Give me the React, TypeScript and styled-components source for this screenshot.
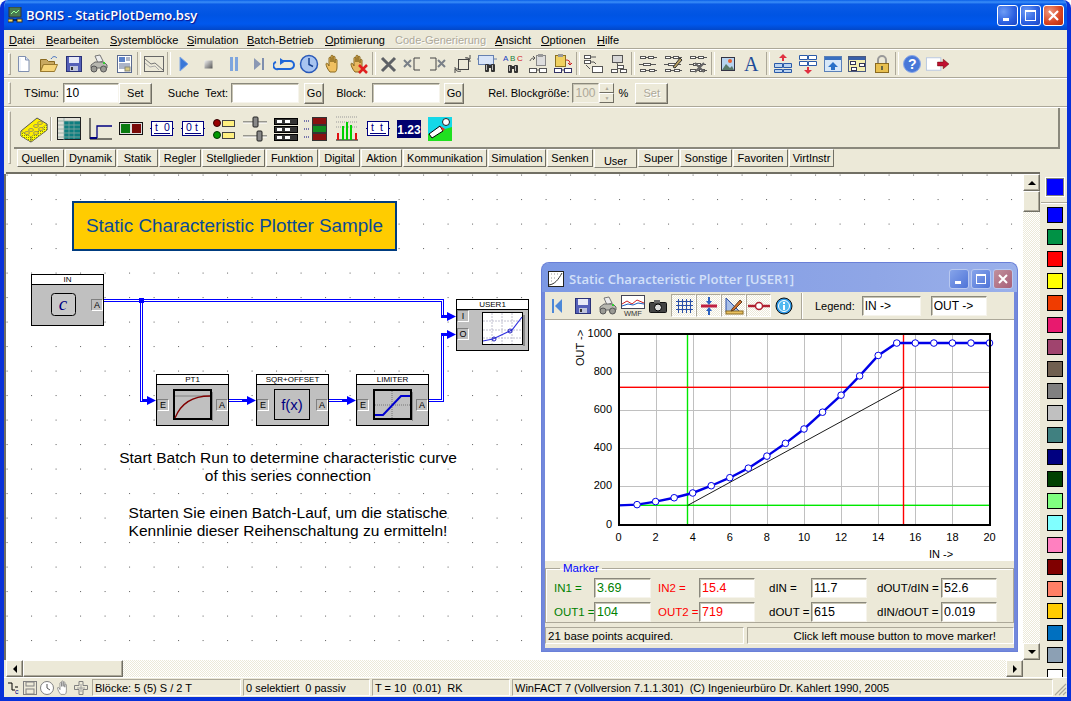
import React from "react";
import styled, { createGlobalStyle } from "styled-components";

const Global = createGlobalStyle`
  html, body { margin: 0; padding: 0; background: #fff; overflow: hidden; }
  * { box-sizing: border-box; }
`;
const UI = `"Liberation Sans", Arial, sans-serif`;
const FACE = "#ECE9D8";
const Dither = `repeating-conic-gradient(#fff 0 25%, ${FACE} 0 50%) 0 0 / 2px 2px`;

const Frame = styled.div`
  width: 1071px; height: 701px; display: flex; flex-direction: column; overflow: hidden;
  background: ${FACE}; border-radius: 8px 8px 0 0; font: 11px ${UI}; color: #000;
  border-left: 4px solid #0831D9; border-right: 4px solid #0831D9; border-bottom: 4px solid #0831D9;
`;
const TitleBar = styled.div`
  height: 30px; margin: 0 -4px; padding: 0 7px 0 8px; display: flex; align-items: center; flex: none;
  background: linear-gradient(180deg, #0A5FE8 0%, #3B8EF8 7%, #0A5BE6 14%, #0054E3 50%, #0058EE 80%, #0247C8 100%);
`;
const TitleText = styled.span`
  margin-left: 3px; color: #fff; font: 600 13px "Open Sans", sans-serif; text-shadow: 1px 1px 1px #0F1089;
`;
const CapGroup = styled.div`margin-left: auto; display: flex; gap: 2px;`;
const CapBtn = styled.div<{ $close?: boolean; $dim?: boolean; $s?: number }>`
  width: ${p => p.$s ?? 21}px; height: ${p => p.$s ?? 21}px; border: 1px solid ${p => (p.$dim ? "#B8C8F0" : "#fff")}; border-radius: 3px;
  display: flex; align-items: center; justify-content: center;
  background: ${p => p.$close
    ? (p.$dim ? "linear-gradient(135deg,#C0909C,#A85F78)" : "radial-gradient(circle at 30% 30%,#EE9A80,#D8431F 60%,#B52A0C)")
    : (p.$dim ? "linear-gradient(135deg,#86A4EA,#4F74D8)" : "radial-gradient(circle at 30% 30%,#6E9CF5,#2A5FE0 60%,#1C46C4)")};
`;
const MenuBar = styled.div`height: 19px; display: flex; align-items: center; padding-left: 5px; flex: none;`;
const MenuItem = styled.span<{ $w: number; $off?: boolean }>`
  width: ${p => p.$w}px; flex: none; white-space: nowrap; color: ${p => (p.$off ? "#ACA899" : "#000")};
  text-shadow: ${p => (p.$off ? "1px 1px 0 #fff" : "none")};
  u { text-decoration-thickness: 1px; text-underline-offset: 1px; }
`;
const Band = styled.div<{ $h: number }>`
  height: ${p => p.$h}px; flex: none; display: flex; align-items: center; position: relative;
  border-top: 1px solid #fff; box-shadow: 0 -1px 0 #ACA899;
`;
const Grip = styled.div`
  width: 3px; height: calc(100% - 6px); margin-left: 4px; flex: none;
  border-left: 1px solid #fff; border-top: 1px solid #fff; border-right: 1px solid #ACA899; border-bottom: 1px solid #ACA899;
`;
const Tools = styled.div`display: flex; align-items: center; margin-left: 1px; padding-bottom: 1px;`;
const ToolBtn = styled.div`width: 24.95px; height: 24px; display: flex; align-items: center; justify-content: center; flex: none;`;
const Sep = styled.div`width: 5px; height: 23px; flex: none; display: flex; justify-content: center; &::before { content: ""; width: 2px; border-left: 1px solid #ACA899; border-right: 1px solid #fff; }`;
const Label = styled.span<{ $ml: number }>`margin-left: ${p => p.$ml}px; white-space: pre; flex: none;`;
const Field = styled.input<{ $w: number; $ml?: number; $color?: string; $off?: boolean }>`
  width: ${p => p.$w}px; height: 20px; flex: none; margin: 0 0 0 ${p => p.$ml ?? 0}px; padding: 0 2px; background: ${p => (p.$off ? FACE : "#fff")};
  border: 1px solid; border-color: #8A887C #F6F4EC #F6F4EC #8A887C; box-shadow: inset 1px 1px 0 #C8C5B4; outline: none;
  font: 12px ${UI}; color: ${p => p.$color ?? (p.$off ? "#ACA899" : "#000")};
`;
const Btn = styled.div<{ $w: number; $ml?: number; $off?: boolean }>`
  width: ${p => p.$w}px; height: 21px; flex: none; margin-left: ${p => p.$ml ?? 0}px; display: flex; align-items: center; justify-content: center;
  background: ${FACE}; border: 1px solid; border-color: #fff #716F64 #716F64 #fff; box-shadow: inset -1px -1px 0 #ACA899;
  color: ${p => (p.$off ? "#ACA899" : "#000")}; text-shadow: ${p => (p.$off ? "1px 1px 0 #fff" : "none")};
`;
const Spin = styled.div`width: 15px; height: 20px; flex: none; display: flex; flex-direction: column;`;
const SpinPart = styled.div`flex: 1; border: 1px solid; border-color: #fff #716F64 #716F64 #fff; display: flex; align-items: center; justify-content: center; font-size: 5px; color: #ACA899;`;
const PaletteCol = styled.div`display: flex; flex-direction: column; flex: none; margin-left: 3px; height: 100%; align-self: flex-start;`;
const IconShelf = styled.div`
  width: 1046px; height: 41px; display: flex; align-items: center; padding: 2px 0 0 5px; flex: none;
  border-right: 2px solid #8A887C; border-bottom: 2px solid #8A887C;
`;
const PaletteBtn = styled.div`width: 30.9px; height: 28px; display: flex; align-items: center; justify-content: center; flex: none;`;
const ShelfSep = styled.div`width: 2px; height: 24px; margin: 0 2px 0 0; border-left: 1px solid #ACA899; border-right: 1px solid #fff; flex: none;`;
const TabRow = styled.div`display: flex; gap: 1px; padding-left: 3px; height: 18px;`;
const Tab = styled.div<{ $w: number; $on?: boolean }>`
  width: ${p => p.$w}px; flex: none; height: ${p => (p.$on ? 19 : 18)}px; display: flex; align-items: center; justify-content: center; font-size: 11px;
  padding-top: ${p => (p.$on ? 4 : 0)}px; background: ${FACE}; white-space: nowrap;
  border: 1px solid; border-color: ${p => (p.$on ? `${FACE} #716F64 #8A887C #fff` : "#fff #716F64 #716F64 #fff")};
`;
const Main = styled.div`flex: 1; min-height: 0; display: flex; padding-top: 5px;`;
const Doc = styled.div`flex: none; width: 1036px; padding: 0 0 0 2px; display: flex; flex-direction: column;`;
const DocRow = styled.div`height: 488px; flex: none; display: flex; border-top: 2px solid #716F64;`;
const Canvas = styled.div`
  width: 1017px; height: 486px; flex: none; position: relative; overflow: hidden; background-color: #fff;
  box-shadow: -2px 0 0 #716F64;
  background-image: radial-gradient(circle at 0.5px 0.5px, #555 0.65px, transparent 0.8px);
  background-size: 24.5px 24.5px; background-position: 0.6px 0.6px;
`;
const VScroll = styled.div`width: 17px; height: 486px; flex: none; display: flex; flex-direction: column; background: ${Dither};`;
const HScroll = styled.div`width: 1017px; height: 17px; flex: none; display: flex; background: ${Dither};`;
const SBtn = styled.div<{ $w?: number; $h?: number }>`
  width: ${p => p.$w ?? 17}px; height: ${p => p.$h ?? 17}px; flex: none; background: ${FACE}; display: flex; align-items: center; justify-content: center;
  border: 1px solid; border-color: #fff #716F64 #716F64 #fff; box-shadow: inset -1px -1px 0 #ACA899;
`;
const Spacer = styled.div`flex: 1;`;
const Tri = styled.div<{ $dir: "u" | "d" | "l" | "r" }>`
  width: 0; height: 0; border: 4px solid transparent;
  ${p => p.$dir === "u" ? "border-bottom-color:#000;border-top-width:0;" : p.$dir === "d" ? "border-top-color:#000;border-bottom-width:0;" : p.$dir === "l" ? "border-right-color:#000;border-left-width:0;" : "border-left-color:#000;border-right-width:0;"}
`;
const Palette = styled.div`width: 27px; flex: none; display: flex; flex-direction: column; padding: 6px 0 0 7px; overflow: hidden;`;
const BigSwatch = styled.div<{ $c: string }>`width: 18px; height: 18px; margin-left: -1px; flex: none; background: ${p => p.$c}; border: 1px solid #808080; box-shadow: 0 0 0 1px #fff;`;
const PalRule = styled.div`height: 2px; flex: none; margin: 6px 0 3px -6px; width: 30px; border-top: 1px solid #ACA899; border-bottom: 1px solid #fff;`;
const Swatch = styled.div<{ $c: string }>`width: 16px; height: 16px; flex: none; margin-bottom: 6px; background: ${p => p.$c}; border: 1px solid #000;`;
const Status = styled.div`height: 20px; flex: none; display: flex; align-items: stretch; padding: 1px 0 1px 3px; border-top: 1px solid #fff; font-size: 11px;`;
const StatusIcons = styled.div`width: 85px; flex: none; display: flex; align-items: center; gap: 1px;`;
const Cell = styled.div<{ $w?: number; $ml?: number }>`
  ${p => (p.$w ? `width:${p.$w}px;flex:none;` : "flex:1;")} margin-left: ${p => p.$ml ?? 0}px; padding-left: 2px; display: flex; align-items: center; white-space: pre;
  border: 1px solid; border-color: #ACA899 #fff #fff #ACA899; overflow: hidden;
`;
const GripBox = styled.div`margin-left: auto; width: 14px; flex: none; align-self: flex-end; height: 14px; display: flex;`;

/* diagram */
const Wires = styled.svg`position: absolute; left: 0; top: 0;`;
const Banner = styled.div`
  position: absolute; left: 66px; top: 27px; width: 325px; height: 50px; background: #FFCC00; border: 2px solid #003C80;
  display: flex; align-items: center; justify-content: center; color: #0A4A96; font: 18.9px ${UI};
`;
const Block = styled.div<{ $x: number; $y: number }>`
  position: absolute; left: ${p => p.$x - 6}px; top: ${p => p.$y - 174}px; width: 73px; height: 52px; background: #C0C0C0; border: 1px solid #000;
  display: flex; flex-direction: column;
`;
const BlockTitle = styled.div`height: 10px; flex: none; background: #fff; border-bottom: 1px solid #000; font: 8px/9px ${UI}; text-align: center;`;
const BlockBody = styled.div`flex: 1; display: flex; align-items: center; justify-content: space-between;`;
const PortCol = styled.div`display: flex; flex-direction: column; gap: 6px; align-self: flex-start;`;
const Port = styled.div`
  width: 12px; height: 12px; flex: none; background: #BEBEBE; border: 1px solid; border-color: #808080 #fff #fff #808080; font: 9px/10px ${UI}; text-align: center;
`;
const PortGap = styled.div`width: 5px; flex: none;`;
const Note = styled.div`
  position: absolute; left: 82px; width: 400px; top: 275px; text-align: center; font: 15.5px/18.3px ${UI};
`;
const NoteGap = styled.div`height: 18px;`;

/* plotter */
const Plotter = styled.div`
  position: absolute; left: 536px; top: 89px; width: 475px; height: 388px; display: flex; flex-direction: column;
  background: ${FACE}; border: 3px solid #7288DC; border-top: 0; border-radius: 7px 7px 0 0; box-shadow: 0 0 0 1px #6A80D8;
`;
const PlotTitle = styled.div`
  height: 29px; flex: none; margin: 0 -3px; padding: 3px 4px 0 6px; display: flex; align-items: center; border-radius: 7px 7px 0 0;
  background: linear-gradient(90deg, #7C98E4 0%, #8FA6E6 70%, #9AB0EA 100%);
`;
const PlotTitleText = styled.span`margin-left: 5px; color: #D3E0F8; font: 600 13.1px "Open Sans", sans-serif;`;
const PlotTools = styled.div`height: 28px; flex: none; display: flex; align-items: center; border-bottom: 1px solid #ACA899;`;
const PlotBtn = styled.div<{ $on?: boolean }>`
  width: 25px; height: 23px; flex: none; display: flex; align-items: center; justify-content: center;
  ${p => (p.$on ? `background: ${Dither}; border: 1px solid; border-color: #ACA899 #fff #fff #ACA899;` : "")}
`;
const PlotSpacer = styled.div<{ $w: number }>`width: ${p => p.$w}px; flex: none;`;
const PlotSep = styled.div`width: 2px; height: 26px; margin: 0 12px 0 5px; border-left: 1px solid #ACA899; border-right: 1px solid #fff; flex: none;`;
const Chart = styled.svg`display: block; flex: none; background: #fff;`;
const Group = styled.fieldset`
  margin: 2px 0 0 0; padding: 0 0 0 8px; height: 60px; flex: none; border: 1px solid #ACA899; box-shadow: inset 1px 1px 0 #fff; min-width: 0;
`;
const GroupLegend = styled.legend`color: #0000FF; font-size: 11.5px; padding: 0 3px; margin-left: 6px; line-height: 11px;`;
const MarkerGrid = styled.div`
  display: grid; grid-template-columns: 40px 57px 48px 56px 56px 56px 74px 56px; grid-auto-rows: 20px; row-gap: 4px; margin-top: 4px; align-items: center;
`;
const MLabel = styled.span<{ $c?: string; $pl?: number }>`color: ${p => p.$c ?? "#000"}; padding-left: ${p => p.$pl ?? 0}px; white-space: nowrap; font-size: 11.5px;`;
const MField = styled(Field).attrs({ readOnly: true })`width: 100%; height: 20px; font-size: 12.5px; margin: 0;`;
const PlotStatus = styled.div`flex: 1; display: flex; gap: 3px; padding-top: 4px; font-size: 11.5px; min-height: 0;`;
const PlotCell = styled.div<{ $w?: number; $right?: boolean }>`
  ${p => (p.$w ? `width:${p.$w}px;flex:none;` : "flex:1;")} height: 17px; display: flex; align-items: center; padding: 0 2px; white-space: nowrap;
  justify-content: ${p => (p.$right ? "flex-end" : "flex-start")}; padding-right: ${p => (p.$right ? 17 : 2)}px;
  border: 1px solid; border-color: #ACA899 #fff #fff #ACA899;
`;

/* ---- drawings ---- */
const Ic = ({ w = 20, h = 20, children }: { w?: number; h?: number; children: React.ReactNode }) => (
  <svg width={w} height={h} viewBox={`0 0 ${w} ${h}`}>{children}</svg>
);
const Binoc = ({ x = 0, y = 0 }: { x?: number; y?: number }) => (
  <g transform={`translate(${x} ${y})`} fill="#333">
    <rect x="1" y="2" width="4" height="8" rx="1" /><rect x="7" y="2" width="4" height="8" rx="1" /><rect x="4" y="3" width="4" height="3" />
    <rect x="2" y="3" width="1" height="5" fill="#BBB" /><rect x="8" y="3" width="1" height="5" fill="#BBB" />
  </g>
);
const Mini = ({ x, y, w = 7, h = 4, c = "#555", f = "#fff" }: { x: number; y: number; w?: number; h?: number; c?: string; f?: string }) => (
  <rect x={x + 0.5} y={y + 0.5} width={w} height={h} fill={f} stroke={c} />
);
const Net = ({ extra }: { extra?: React.ReactNode }) => (
  <Ic>
    <Mini x={2} y={2} w={5} h={2} /><Mini x={10} y={2} w={5} h={2} /><path d="M7 3.500h3M15 3.500h4M1 10.500h4M13 10.500h5" stroke="#555" fill="none" />
    <Mini x={5} y={9} w={7} h={2} /><Mini x={2} y={15} w={5} h={2} /><Mini x={11} y={15} w={5} h={2} /><path d="M7 16.500h4M16 16.500h3" stroke="#555" />
    {extra}
  </Ic>
);
const handPath = "M6 18c-2-2-4-6-4-8 0-1 1-1 2 0l1 2V4c0-1 2-1 2 0v4-6c0-1 2-1 2 0v6-5c0-1 2-1 2 0v6-3c0-1 2-1 2 0v7c0 3-1 5-2 5H6z";
const TBox = ({ a, b }: { a: string; b: string }) => (
  <Ic w={24} h={18}>
    <rect x="1.500" y="1.500" width="21" height="14" fill="#fff" stroke="#000080" />
    <rect x="0" y="8" width="1" height="1" fill="#000080" /><rect x="23" y="8" width="1" height="1" fill="#000080" />
    <text x="5" y="11" fontSize="10.5" fontFamily={UI} fill="#000080">{a}</text>
    <text x="14" y="11" fontSize="10.5" fontFamily={UI} fill="#000080">{b}</text>
    <path d="M4 13.500h16" stroke="#000080" />
  </Ic>
);

const icons: Record<string, React.ReactNode> = {
  new: <Ic><path d="M4.500 2.500h7l3.500 3.500v11.500h-10.500z" fill="#fff" stroke="#7F8FB0" /><path d="M11.500 2.500v3.500h3.500" fill="#D8E2F4" stroke="#7F8FB0" /><path d="M6 17V4" stroke="#DCE6F6" /></Ic>,
  open: <Ic><path d="M1.500 5.500h6l2 2h6v3h-11l-3 7z" fill="#C8A860" stroke="#8A6A20" /><path d="M1.500 17.500l3-7h14l-3 7z" fill="#F6D57A" stroke="#9A7A30" /><path d="M12 5c2-3 4-3 6-1" stroke="#3A6AC0" fill="none" /></Ic>,
  save: <Ic><rect x="2.500" y="2.500" width="15" height="15" fill="#5560B8" stroke="#2A3278" /><rect x="5" y="3" width="10" height="6" fill="#E8EAF6" /><rect x="6" y="12" width="8" height="5" fill="#BFC4DC" /><rect x="7" y="13" width="2" height="3" fill="#333" /></Ic>,
  print: <Ic><path d="M6 2l5-1 3 6-5 2z" fill="#EDEDED" stroke="#777" /><path d="M2 11l4-3h9l3 3v3H2z" fill="#B8B8B0" stroke="#666" /><circle cx="5" cy="15" r="3" fill="#9A9A94" stroke="#555" /><circle cx="14.500" cy="15" r="3" fill="#9A9A94" stroke="#555" /><rect x="14" y="8" width="2" height="2" fill="#3C3" /></Ic>,
  props: <Ic><rect x="3.500" y="1.500" width="14" height="17" fill="#fff" stroke="#5A6A90" /><rect x="5" y="3" width="6" height="5" fill="#5A80C8" /><path d="M12 4h4M12 6h4M5 10h11M5 12h11M5 14h7" stroke="#5A6A90" /><rect x="11" y="13" width="5" height="4" fill="#D8C880" stroke="#887" /></Ic>,
  plot: <Ic w={24}><rect x="2.500" y="2.500" width="19" height="15" fill={FACE} stroke="#666" /><path d="M3 5l6 5 4-1 8 7" stroke="#777" fill="none" /><path d="M3 9l5 4 5-1 4 4" stroke="#AAA" fill="none" /></Ic>,
  play: <Ic><path d="M6 3l8 7-8 7z" fill="#3A78D8" stroke="#7FA6E4" /></Ic>,
  stop: <Ic><defs><linearGradient id="stg" x1="0" y1="0" x2="1" y2="1"><stop offset="0" stopColor="#F0F0F0" /><stop offset="1" stopColor="#555" /></linearGradient></defs><rect x="5.500" y="6.500" width="8" height="8" fill="url(#stg)" /></Ic>,
  pause: <Ic><rect x="6" y="3" width="3" height="14" fill="#7FA6DE" /><rect x="11" y="3" width="3" height="14" fill="#7FA6DE" /></Ic>,
  step: <Ic><path d="M5 4l7 6-7 6z" fill="#8A98B4" /><rect x="13" y="4" width="2" height="12" fill="#7F8FAE" /></Ic>,
  loop: <Ic w={22}><path d="M7 6h10a3.500 3.500 0 010 8H5a3.500 3.500 0 01-2-7" fill="none" stroke="#1E66D8" strokeWidth="2" transform="translate(0 1)" /><path d="M7 4v7l5-3.500z" fill="#1E66D8" /></Ic>,
  clock: <Ic><circle cx="10" cy="10" r="8.500" fill="#A8C4F0" stroke="#2858B8" strokeWidth="1.500" /><path d="M10 4v6.500l4 2" fill="none" stroke="#16408E" strokeWidth="1.500" /></Ic>,
  hand: <Ic><path d={handPath} fill="#F0C060" stroke="#8A6A20" /></Ic>,
  handx: <Ic><path d={handPath} fill="#E8B860" stroke="#8A6A20" /><path d="M10 11l8 8M18 11l-8 8" stroke="#E02020" strokeWidth="2.500" /></Ic>,
  x: <Ic><path d="M3 4l13 13M16 4L3 17" stroke="#5E6166" strokeWidth="3" /></Ic>,
  xl: <Ic w={22}><path d="M1 6l7 7M8 6l-7 7" stroke="#7A8088" strokeWidth="2" /><path d="M17 4h-6v12h6" fill="none" stroke="#444" /></Ic>,
  xr: <Ic w={22}><path d="M3 4h6v12H3" fill="none" stroke="#444" /><path d="M11 6l7 7M18 6l-7 7" stroke="#7A8088" strokeWidth="2" /></Ic>,
  rot: <Ic><rect x="5.500" y="5.500" width="10" height="10" fill="none" stroke="#444" /><path d="M12 4c2-1 5 0 5 4M17 1v4h-4M8 17c-3 1-6 0-6-4M2 19v-4h4" fill="none" stroke="#444" /></Ic>,
  find: <Ic w={22}><rect x="1.500" y="1.500" width="15" height="9" fill="#D8E4F8" stroke="#6680B0" /><path d="M2 5h-2M17 5h3" stroke="#6680B0" /><Binoc x={7} y={8} /></Ic>,
  abc: <Ic w={22}><text x="1" y="7" fontSize="8" fontFamily={UI} fill="#2040C0">A</text><text x="8" y="7" fontSize="8" fontFamily={UI} fill="#208040">B</text><text x="15" y="7" fontSize="8" fontFamily={UI} fill="#D02020">C</text><Binoc x={5} y={9} /></Ic>,
  copyb: <Ic><rect x="8.500" y="1.500" width="9" height="10" fill="#DDD" stroke="#888" /><rect x="10" y="0" width="5" height="3" fill="#999" /><path d="M2 7c1-3 3-3 5-3m-2-2l2 2-2 2" fill="none" stroke="#555" /><Mini x={1} y={14} w={7} h={4} /><Mini x={11} y={14} w={7} h={4} /><path d="M8 16h3" stroke="#555" /></Ic>,
  pasteb: <Ic><rect x="2.500" y="1.500" width="10" height="11" fill="#F0D060" stroke="#8A7020" /><rect x="5" y="0" width="5" height="3" fill="#999" /><path d="M13 6c3 0 4 1 4 4m-2-1l2 2 2-2" fill="none" stroke="#D02020" /><Mini x={1} y={14} w={7} h={4} c="#336" /><Mini x={11} y={14} w={7} h={4} c="#336" /><path d="M8 16h3" stroke="#336" /></Ic>,
  n1: <Ic><Mini x={1} y={1} w={6} h={3} /><Mini x={1} y={6} w={6} h={3} /><path d="M7 3h6M7 8h4l2 2M3 11l4 4" stroke="#555" fill="none" /><Mini x={9} y={12} w={10} h={6} /></Ic>,
  n2: <Ic><rect x="4.500" y="1.500" width="10" height="7" fill="#D8D8D8" stroke="#555" /><path d="M9 9l1 3" stroke="#555" /><Mini x={9} y={11} w={6} h={3} /><Mini x={3} y={15} w={6} h={3} /><Mini x={12} y={15} w={6} h={3} /></Ic>,
  n3: <Net />,
  n4: <Net extra={<path d="M10 13l7-9 2 2-7 8z" fill="#B8A060" stroke="#333" />} />,
  n5: <Net extra={<path d="M7 9l9 9M16 9l-9 9" stroke="#666" strokeWidth="2" />} />,
  pic: <Ic><rect x="3.500" y="3.500" width="13" height="13" fill="#B8D4F0" stroke="#334" /><path d="M4 16l4-6 4 4 2-2 2 4z" fill="#5A7A6A" /><circle cx="12" cy="7" r="2" fill="#E86030" /></Ic>,
  a: <Ic w={20} h={24}><text x="1" y="19" fontSize="20" fontFamily={`"Liberation Serif", serif`} fill="#1E4C98">A</text></Ic>,
  up1: <Ic><path d="M10 0l-4 4h3v3h2V4h3z" fill="#E03040" /><path d="M1.500 9.500h8v4h-8zM10.500 9.500h8v4h-8zM1.500 15.500h8v3h-8zM10.500 15.500h8v3h-8z" fill="#BCD4F0" stroke="#2A5AA8" /></Ic>,
  dn1: <Ic><path d="M1.500 1.500h8v4h-8zM10.500 1.500h8v4h-8zM1.500 7.500h8v4h-8zM10.500 7.500h8v4h-8z" fill="#fff" stroke="#2A5AA8" /><path d="M10 20l-4-4h3v-3h2v3h3z" fill="#E03040" /></Ic>,
  win: <Ic><rect x="1.500" y="2.500" width="17" height="15" fill="#D8E8F8" stroke="#5A80B8" /><rect x="2" y="3" width="16" height="3" fill="#3A70C0" /><path d="M10 8l-5 5h3v3h4v-3h3z" fill="#2A70C8" /></Ic>,
  tree: <Ic><rect x="1.500" y="2.500" width="17" height="15" fill="#F4EEB0" stroke="#4A5A80" /><rect x="2" y="3" width="16" height="3" fill="#3A60A8" /><Mini x={3} y={7} w={5} h={3} c="#335" /><Mini x={12} y={9} w={5} h={3} c="#335" /><Mini x={4} y={13} w={5} h={3} c="#335" /></Ic>,
  lock: <Ic><path d="M6 9V6a4 4 0 018 0v3" fill="none" stroke="#999" strokeWidth="2" /><rect x="3.500" y="9.500" width="13" height="9" fill="#E8C050" stroke="#8A6A20" /><rect x="9" y="12" width="2" height="4" fill="#664" /></Ic>,
  help: <Ic><circle cx="10" cy="10" r="8.500" fill="#4878D8" stroke="#8AA8E8" /><text x="6" y="15" fontSize="14" fontWeight="700" fontFamily={UI} fill="#fff">?</text></Ic>,
  exit: <Ic w={26}><rect x="1.500" y="3.500" width="15" height="13" fill="#fff" stroke="#B8C8E0" /><path d="M13 8h6V5l6 5-6 5v-3h-6z" fill="#C01030" stroke="#600" strokeWidth=".5" /></Ic>,
  brick: <Ic w={28} h={28}>
    <defs><pattern id="yd" width="2" height="2" patternUnits="userSpaceOnUse"><rect width="2" height="2" fill="#FFFF00" /><rect width="1" height="1" fill="#8A8A00" /></pattern></defs>
    <path d="M1 16L17 3l10 6v6L11 27 1 21z" fill="#FFF000" stroke="#555" />
    <path d="M1 16l10 6v5L1 21zM11 22L27 9v6L11 27z" fill="url(#yd)" stroke="#666" strokeWidth=".5" />
    <g fill="#FFE800" stroke="#777" strokeWidth=".7"><ellipse cx="11" cy="15" rx="2.500" ry="1.500" /><ellipse cx="16" cy="11" rx="2.500" ry="1.500" /><ellipse cx="20" cy="8" rx="2.500" ry="1.500" /><ellipse cx="16" cy="18" rx="2.500" ry="1.500" /><ellipse cx="21" cy="14" rx="2.500" ry="1.500" /><ellipse cx="7" cy="18" rx="2.500" ry="1.500" /></g>
  </Ic>,
  table: <Ic w={24} h={24}><rect x=".5" y=".5" width="23" height="22" fill="#E0E0D8" stroke="#222" /><rect x="7" y="4" width="16" height="18" fill="#0E7E80" /><path d="M1 4h22M1 8h22M1 12h22M1 16h22M1 20h22" stroke="#90A8A0" strokeWidth=".8" /><path d="M7 1v22M12 4v18M17 4v18" stroke="#80A8A8" strokeWidth=".7" /></Ic>,
  stepr: <Ic w={26} h={24}><path d="M3 1v21h22" fill="none" stroke="#000" /><path d="M10 21V9h15" fill="none" stroke="#000080" strokeWidth="1.300" /><path d="M3 21h7" stroke="#000080" strokeWidth="2" /></Ic>,
  boxes: <Ic w={24} h={20}><rect x=".5" y="3.500" width="23" height="12" fill="#ddd" stroke="#111" /><rect x="2" y="5" width="9" height="9" fill="#0A7A10" /><rect x="13" y="5" width="9" height="9" fill="#7A0A0A" /></Ic>,
  t10: <TBox a="t" b="0" />,
  t01: <TBox a="0" b="t" />,
  lamps: <Ic w={24} h={22}><circle cx="5" cy="5" r="3.500" fill="#900" stroke="#300" /><circle cx="5" cy="17" r="3.500" fill="#090" stroke="#030" /><rect x="10.500" y="2.500" width="12" height="6" fill="#FFF080" stroke="#444" /><rect x="10.500" y="14.500" width="12" height="6" fill="#FFF080" stroke="#444" /></Ic>,
  sliders: <Ic w={24} h={26}><path d="M0 6h24M0 20h24" stroke="#444" /><path d="M0 7h24M0 21h24" stroke="#fff" /><rect x="10" y="1" width="5" height="10" rx="1" fill="#888" stroke="#222" /><rect x="14" y="15" width="5" height="10" rx="1" fill="#888" stroke="#222" /></Ic>,
  rack: <Ic w={24} h={24}>{[1, 9, 17].map(y => <g key={y}><rect x=".5" y={y + 0.5} width="23" height="6" fill="#333" stroke="#000" /><path d={`M3 ${y + 2}h5v3H3zM11 ${y + 2}h5v3h-5z`} fill="#fff" /></g>)}</Ic>,
  meters: <Ic w={26} h={24}><path d="M1 4h6M1 12h6M1 20h6" stroke="#000080" strokeDasharray="1 1" /><rect x="9.500" y=".5" width="14" height="7" fill="#8A1010" stroke="#333" /><rect x="9.500" y="8.500" width="14" height="7" fill="#108A20" stroke="#333" /><rect x="9.500" y="16.500" width="14" height="7" fill="#8A1010" stroke="#333" /></Ic>,
  bars: <Ic w={26} h={26}><path d="M2 1h22M2 6h22M2 11h22" stroke="#999" strokeDasharray="1 1" /><path d="M2 24h22" stroke="#000" /><g fill="#00D000"><rect x="8" y="10" width="2" height="14" /><rect x="12" y="6" width="2" height="18" /><rect x="16" y="9" width="2" height="15" /></g><g fill="#E01010"><rect x="3" y="17" width="2" height="7" /><rect x="21" y="17" width="2" height="7" /></g></Ic>,
  t12: <TBox a="t" b="t" />,
  num: <Ic w={24} h={20}><rect y="1" width="24" height="18" fill="#00006E" /><text x="12" y="15" textAnchor="middle" fontSize="12" fontWeight="700" fontFamily={UI} fill="#fff">1.23</text></Ic>,
  art: <Ic w={24} h={24}><rect width="24" height="24" fill="#14D8E8" /><path d="M0 24V17L24 10v14z" fill="#20E020" /><circle cx="18" cy="5" r="3.500" fill="#fff" stroke="#222" /><path d="M1 17l11-8 3 5-11 7z" fill="#fff" stroke="#000" /><path d="M12 9l5 3-2 2z" fill="#F03020" /></Ic>,
  pFirst: <Ic><rect x="4" y="3" width="2" height="14" fill="#4C88D8" /><path d="M14 3v14L7 10z" fill="#4C88D8" /></Ic>,
  cam: <Ic><rect x="1.500" y="6.500" width="17" height="10" rx="1" fill="#444" stroke="#111" /><rect x="6" y="4" width="6" height="3" fill="#666" /><circle cx="10" cy="11.500" r="3.500" fill="#DDD" stroke="#000" /></Ic>,
  wmf: <Ic w={24} h={22}><rect x=".5" y=".5" width="23" height="13" fill="#fff" stroke="#445" /><path d="M1 9l5-3 5 3 5-4 7 3" fill="none" stroke="#D02020" /><path d="M1 11l6-2 5 1 5-2 6 1" fill="none" stroke="#2060C0" /><text x="12" y="21" textAnchor="middle" fontSize="7.500" fontFamily={UI} fill="#333">WMF</text></Ic>,
  grid: <Ic><path d="M4.500 3v14M8.500 3v14M12.500 3v14M16.500 3v14M2 5.500h17M2 9.500h17M2 13.500h17" stroke="#2A4FA8" /></Ic>,
  cross: <Ic><path d="M2 10h16" stroke="#C02040" strokeWidth="3" /><path d="M9 1h2v4h2l-3 4-3-4h2zM9 19h2v-4h2l-3-4-3 4h2z" fill="#2A60C0" /></Ic>,
  ruler: <Ic><path d="M2 2v14h14z" fill="#A8C0E8" stroke="#2A4FA8" /><rect x="2" y="15" width="17" height="3" fill="#E8C060" stroke="#8A6A20" /><path d="M8 13l8-9 2 2-8 8-3 1z" fill="#D07030" stroke="#604020" /></Ic>,
  dot: <Ic w={22}><path d="M0 10h22" stroke="#B02030" strokeWidth="2.500" /><circle cx="11" cy="10" r="3.500" fill="#fff" stroke="#B02030" strokeWidth="1.500" /></Ic>,
  info: <Ic><circle cx="10" cy="10" r="8" fill="#2E9AE8" stroke="#111" /><circle cx="10" cy="10" r="5.500" fill="#50B8F0" stroke="#fff" /><rect x="9" y="9" width="2" height="5" fill="#fff" /><rect x="9" y="6" width="2" height="2" fill="#fff" /></Ic>,
};
const tb1: (string | null)[] = ["new", "open", "save", "print", "props", null, "plot", null, "play", "stop", "pause", "step", "loop", "clock", "hand", "handx", null, "x", "xl", "xr", "rot", "find", "abc", "copyb", "pasteb", null, "n1", "n2", null, "n3", "n4", "n5", null, "pic", "a", null, "up1", "dn1", "win", "tree", "lock", null, "help", "exit"];
const menu: [string, string, number, boolean?][] = [["D", "atei", 37], ["B", "earbeiten", 64], ["S", "ystemblöcke", 77], ["S", "imulation", 60], ["B", "atch-Betrieb", 78], ["O", "ptimierung", 70], ["", "Code-Generierung", 100, true], ["A", "nsicht", 46], ["O", "ptionen", 56], ["H", "ilfe", 30]];
const tabs: [string, number, boolean?][] = [["Quellen", 47], ["Dynamik", 51], ["Statik", 41], ["Regler", 42], ["Stellglieder", 63], ["Funktion", 52], ["Digital", 41], ["Aktion", 41], ["Kommunikation", 84], ["Simulation", 58], ["Senken", 46], ["User", 43, true], ["Super", 41], ["Sonstige", 52], ["Favoriten", 55], ["VirtInstr", 45]];
const colours = ["#0000FF", "#009245", "#FF0000", "#FFFF00", "#F03C00", "#E8196E", "#A0446E", "#706050", "#808080", "#C0C0C0", "#408080", "#000080", "#004000", "#80FF80", "#80FFFF", "#FF80C0", "#800000", "#FF8066", "#FFCC00", "#0070C0", "#8CA0B4", "#FFFFFF"];

const Wire = ({ d }: { d: string }) => (
  <g fill="none" shapeRendering="crispEdges">
    <path d={d} stroke="#0000FF" strokeWidth="3" />
    <path d={d} stroke="#fff" strokeWidth="1" />
  </g>
);
const Arrow = ({ x, y }: { x: number; y: number }) => (
  <g fill="#0000FF"><rect x={x - 14} y={y - 1.5} width="6" height="3" /><path d={`M${x - 9} ${y - 4.500}L${x} ${y}L${x - 9} ${y + 4.500}z`} /></g>
);

/* chart helpers */
const X0 = 618.5, X1 = 989.5, Y0 = 523.5, Y1 = 332.5;
const px = (v: number) => X0 + (v / 20) * (X1 - X0);
const py = (v: number) => Y0 - (v / 1000) * (Y0 - Y1);
const snap = (v: number) => Math.round(v) + 0.5;
const data = [100, 104, 120, 140, 165, 203, 245, 295, 358, 425, 500, 588, 677, 778, 885, 950, 950, 950, 950, 950, 950];
const xt = Array.from({ length: 11 }, (_, i) => i * 2);
const yt = Array.from({ length: 6 }, (_, i) => i * 200);

const PlotChart = () => (
  <Chart width={469} height={241} viewBox="545 319 469 241">
    <g stroke="#C0C0C0" shapeRendering="crispEdges">
      {xt.slice(1, -1).map(v => <line key={v} x1={snap(px(v))} x2={snap(px(v))} y1={Y1} y2={Y0} />)}
      {yt.slice(1, -1).map(v => <line key={v} y1={snap(py(v))} y2={snap(py(v))} x1={X0} x2={X1} />)}
    </g>
    <rect x={X0} y="503.6" width={X1 - X0} height="1.4" fill="#00E800" />
    <rect x="686.8" y={Y1} width="1.4" height={Y0 - Y1} fill="#00E800" />
    <rect x={X0} y="385.6" width={X1 - X0} height="1.4" fill="#FF0000" />
    <rect x="902.8" y={Y1} width="1.4" height={Y0 - Y1} fill="#FF0000" />
    <line x1={687.5} y1={504.5} x2={903.5} y2={386.5} stroke="#000" strokeWidth=".9" />
    <polyline points={data.map((v, i) => `${px(i)},${py(v)}`).join(" ")} fill="none" stroke="#0000E8" strokeWidth="2.400" />
    {data.slice(1).map((v, i) => <circle key={i} cx={px(i + 1)} cy={py(v)} r="3.300" fill="#fff" stroke="#0000E8" strokeWidth="1" />)}
    <rect x={X0} y={Y1} width={X1 - X0} height={Y0 - Y1} fill="none" stroke="#000" strokeWidth="2" shapeRendering="crispEdges" />
    <g fontFamily={UI} fontSize="11" fill="#000">
      {yt.map(v => <text key={v} x="612" y={py(v) + 3} textAnchor="end">{v}</text>)}
      {xt.map(v => <text key={v} x={px(v)} y="540" textAnchor="middle">{v}</text>)}
      <text x="929" y="557">IN -&gt;</text>
      <text transform="translate(584 365) rotate(-90)">OUT -&gt;</text>
    </g>
  </Chart>
);

const CornerGrip = () => (
  <svg width="14" height="14" viewBox="0 0 14 14"><path d="M13 2L2 13M13 6L6 13M13 10l-3 3" stroke="#ACA899" fill="none" strokeWidth="1.200" /></svg>
);

export default function App() {
  return (
    <>
      <Global />
      <Frame>
        <TitleBar>
          <svg width="15" height="17" viewBox="0 0 15 17"><rect x="1" y="0" width="12" height="10" fill="#4A7A50" stroke="#333" /><path d="M3 7l3-3 2 2 3-3" stroke="#9F9" fill="none" /><rect x="0" y="12" width="5" height="3" fill="#FFE060" stroke="#333" /><rect x="9" y="12" width="5" height="3" fill="#FFE060" stroke="#333" /><path d="M5 13h4" stroke="#000" /></svg>
          <TitleText>BORIS - StaticPlotDemo.bsy</TitleText>
          <CapGroup>
            <CapBtn><svg width="13" height="13"><rect x="2" y="9" width="6" height="3" fill="#fff" /></svg></CapBtn>
            <CapBtn><svg width="13" height="13"><rect x="1.500" y="1.500" width="10" height="10" fill="none" stroke="#fff" /><rect x="1" y="1" width="11" height="2" fill="#fff" /></svg></CapBtn>
            <CapBtn $close><svg width="13" height="13"><path d="M2 2l9 9M11 2l-9 9" stroke="#fff" strokeWidth="2.200" /></svg></CapBtn>
          </CapGroup>
        </TitleBar>
        <MenuBar>
          {menu.map(([u, r, w, off]) => <MenuItem key={r} $w={w} $off={off}>{u && <u>{u}</u>}{r}</MenuItem>)}
        </MenuBar>
        <Band $h={29}>
          <Grip />
          <Tools>
            {tb1.map((n, i) => n ? <ToolBtn key={i}>{icons[n]}</ToolBtn> : <Sep key={i} />)}
          </Tools>
        </Band>
        <Band $h={29}>
          <Grip />
          <Label $ml={13}>TSimu:</Label>
          <Field $w={56} $ml={4} defaultValue="10" />
          <Btn $w={33}>Set</Btn>
          <Label $ml={16}>{"Suche  Text:"}</Label>
          <Field $w={68} $ml={3} />
          <Btn $w={20} $ml={5}>Go</Btn>
          <Label $ml={12}>Block:</Label>
          <Field $w={68} $ml={6} />
          <Btn $w={20} $ml={4}>Go</Btn>
          <Label $ml={24}>Rel. Blockgröße:</Label>
          <Field $w={27} $ml={3} $off defaultValue="100" />
          <Spin><SpinPart>▲</SpinPart><SpinPart>▼</SpinPart></Spin>
          <Label $ml={4}>%</Label>
          <Btn $w={33} $ml={7} $off>Set</Btn>
        </Band>
        <Band $h={60}>
          <Grip />
          <PaletteCol>
            <IconShelf>
              <PaletteBtn>{icons.brick}</PaletteBtn>
              <ShelfSep />
              {["table", "stepr", "boxes", "t10", "t01", "lamps", "sliders", "rack", "meters", "bars", "t12", "num", "art"].map(n => <PaletteBtn key={n}>{icons[n]}</PaletteBtn>)}
            </IconShelf>
            <TabRow>
              {tabs.map(([t, w, on]) => <Tab key={t} $w={w} $on={on}>{t}</Tab>)}
            </TabRow>
          </PaletteCol>
        </Band>
        <Main>
          <Doc>
            <DocRow>
              <Canvas>
                <Wires width="1017" height="486" viewBox="6 174 1017 486">
                  <Wire d="M103 300.500H442.500V316.500H450" />
                  <Wire d="M141.500 300V400.500H150" />
                  <Wire d="M228 400.500H250" />
                  <Wire d="M328 400.500H350" />
                  <Wire d="M429 400.500H442.500V334.500H450" />
                  <rect x="139" y="298" width="5" height="5" fill="#0000FF" />
                  <Arrow x={156} y={400.5} /><Arrow x={256} y={400.5} /><Arrow x={356} y={400.5} /><Arrow x={456} y={316.5} /><Arrow x={456} y={334.5} />
                </Wires>
                <Banner>Static Characteristic Plotter Sample</Banner>
                <Block $x={31} $y={274}>
                  <BlockTitle>IN</BlockTitle>
                  <BlockBody>
                    <PortGap />
                    <svg width="26" height="24" viewBox="0 0 26 24"><rect x=".5" y=".5" width="24" height="22" rx="3" fill="#C8C8C8" stroke="#000" /><text x="12" y="17" textAnchor="middle" fontFamily={`"Liberation Serif", serif`} fontStyle="italic" fontSize="19" fill="#000080">c</text></svg>
                    <Port>A</Port>
                  </BlockBody>
                </Block>
                <Block $x={456} $y={299}>
                  <BlockTitle>USER1</BlockTitle>
                  <BlockBody>
                    <PortCol><Port>I</Port><Port>O</Port></PortCol>
                    <svg width="46" height="36" viewBox="0 0 46 36"><rect x=".5" y=".5" width="40" height="32" fill="#fff" stroke="#000" /><rect x="41" y="3" width="2" height="31" fill="#888" /><path d="M10 1v31M20 1v31M30 1v31M1 9h39M1 18h39M1 26h39" stroke="#C0C0D0" strokeDasharray="2 1" /><path d="M1 29l10-2 19-9 10-13" fill="none" stroke="#3030E0" strokeWidth="1.200" /><circle cx="12" cy="27" r="2" fill="none" stroke="#2020C0" /><circle cx="28" cy="19" r="2" fill="none" stroke="#2020C0" /></svg>
                  </BlockBody>
                </Block>
                <Block $x={156} $y={374}>
                  <BlockTitle>PT1</BlockTitle>
                  <BlockBody>
                    <Port>E</Port>
                    <svg width="40" height="32" viewBox="0 0 40 32"><rect x="1" y="1" width="37" height="29" fill="#C0C0C0" stroke="#000" strokeWidth="2" /><rect x="39" y="3" width="1" height="29" fill="#888" /><path d="M2 7h35" stroke="#808080" /><path d="M2 29C8 14 20 7 37 7" fill="none" stroke="#800000" strokeWidth="1.300" /></svg>
                    <Port>A</Port>
                  </BlockBody>
                </Block>
                <Block $x={256} $y={374}>
                  <BlockTitle>SQR+OFFSET</BlockTitle>
                  <BlockBody>
                    <Port>E</Port>
                    <svg width="37" height="32" viewBox="0 0 37 32"><rect x=".5" y=".5" width="35" height="30" fill="#C0C0C0" stroke="#000" /><text x="18" y="21" textAnchor="middle" fontFamily={UI} fontSize="15" fill="#000080">f(x)</text></svg>
                    <Port>A</Port>
                  </BlockBody>
                </Block>
                <Block $x={356} $y={374}>
                  <BlockTitle>LIMITER</BlockTitle>
                  <BlockBody>
                    <Port>E</Port>
                    <svg width="40" height="32" viewBox="0 0 40 32"><rect x="1" y="1" width="37" height="29" fill="#C0C0C0" stroke="#000" strokeWidth="2" /><rect x="39" y="3" width="1" height="29" fill="#888" /><path d="M2 16h35M19 2v27" stroke="#777" strokeDasharray="1 1" /><path d="M2 26h8L28 7h9" fill="none" stroke="#0000D0" strokeWidth="2" /></svg>
                    <Port>A</Port>
                  </BlockBody>
                </Block>
                <Note>
                  Start Batch Run to determine characteristic curve<br />of this series connection
                  <NoteGap />
                  Starten Sie einen Batch-Lauf, um die statische<br />Kennlinie dieser Reihenschaltung zu ermitteln!
                </Note>
                <Plotter>
                  <PlotTitle>
                    <svg width="16" height="16" viewBox="0 0 16 16"><rect x=".5" y=".5" width="15" height="15" fill="#fff" stroke="#222" /><path d="M1 14c6-1 9-5 13-12" stroke="#333" fill="none" /><path d="M3 3h1M6 3h1M9 3h1M3 7h1M6 7h1M3 10h1" stroke="#999" /></svg>
                    <PlotTitleText>Static Characteristic Plotter [USER1]</PlotTitleText>
                    <CapGroup>
                      <CapBtn $dim $s={20}><svg width="12" height="12"><rect x="2" y="8" width="6" height="3" fill="#fff" /></svg></CapBtn>
                      <CapBtn $dim $s={20}><svg width="12" height="12"><rect x="1.500" y="1.500" width="9" height="9" fill="none" stroke="#fff" /><rect x="1" y="1" width="10" height="2" fill="#fff" /></svg></CapBtn>
                      <CapBtn $dim $close $s={20}><svg width="12" height="12"><path d="M2 2l8 8M10 2l-8 8" stroke="#fff" strokeWidth="2" /></svg></CapBtn>
                    </CapGroup>
                  </PlotTitle>
                  <PlotTools>
                    <PlotBtn>{icons.pFirst}</PlotBtn>
                    <PlotBtn>{icons.save}</PlotBtn>
                    <PlotBtn>{icons.print}</PlotBtn>
                    <PlotBtn>{icons.wmf}</PlotBtn>
                    <PlotBtn>{icons.cam}</PlotBtn>
                    <PlotSpacer $w={1} />
                    <PlotBtn $on>{icons.grid}</PlotBtn>
                    <PlotBtn $on>{icons.cross}</PlotBtn>
                    <PlotBtn $on>{icons.ruler}</PlotBtn>
                    <PlotBtn $on>{icons.dot}</PlotBtn>
                    <PlotBtn>{icons.info}</PlotBtn>
                    <PlotSep />
                    <Label $ml={0}>Legend:</Label>
                    <Field $w={59} $ml={7} defaultValue="IN ->" />
                    <Field $w={56} $ml={10} defaultValue="OUT ->" />
                  </PlotTools>
                  <PlotChart />
                  <Group>
                    <GroupLegend>Marker</GroupLegend>
                    <MarkerGrid>
                      <MLabel $c="#008000">IN1 =</MLabel><MField $w={57} $color="#008000" value="3.69" />
                      <MLabel $c="#FF0000" $pl={7}>IN2 =</MLabel><MField $w={56} $color="#FF0000" value="15.4" />
                      <MLabel $pl={14}>dIN =</MLabel><MField $w={56} value="11.7" />
                      <MLabel $pl={10}>dOUT/dIN =</MLabel><MField $w={56} value="52.6" />
                      <MLabel $c="#008000">OUT1 =</MLabel><MField $w={57} $color="#008000" value="104" />
                      <MLabel $c="#FF0000" $pl={7}>OUT2 =</MLabel><MField $w={56} $color="#FF0000" value="719" />
                      <MLabel $pl={14}>dOUT =</MLabel><MField $w={56} value="615" />
                      <MLabel $pl={10}>dIN/dOUT =</MLabel><MField $w={56} value="0.019" />
                    </MarkerGrid>
                  </Group>
                  <PlotStatus>
                    <PlotCell $w={199}>21 base points acquired.</PlotCell>
                    <PlotCell $right>Click left mouse button to move marker!</PlotCell>
                  </PlotStatus>
                </Plotter>
              </Canvas>
              <VScroll>
                <SBtn><Tri $dir="u" /></SBtn>
                <SBtn $h={21} />
                <Spacer />
                <SBtn><Tri $dir="d" /></SBtn>
              </VScroll>
            </DocRow>
            <HScroll>
              <SBtn><Tri $dir="l" /></SBtn>
              <SBtn $w={100} />
              <Spacer />
              <SBtn><Tri $dir="r" /></SBtn>
            </HScroll>
          </Doc>
          <Palette>
            <BigSwatch $c="#0000FF" />
            <PalRule />
            {colours.map((c, i) => <Swatch key={i} $c={c} />)}
          </Palette>
        </Main>
        <Status>
          <StatusIcons>
            <svg width="14" height="14" viewBox="0 0 14 14"><path d="M1 2h4v7h3M8 6h3" stroke="#000" fill="none" /><text x="8" y="13" fontSize="7" fontFamily={UI} fill="#000080">c</text></svg>
            <svg width="16" height="16" viewBox="0 0 16 16"><rect x="1.500" y="1.500" width="13" height="13" fill="none" stroke="#808080" /><rect x="4" y="9" width="8" height="5" fill="none" stroke="#808080" /><rect x="4" y="2" width="8" height="4" fill="none" stroke="#808080" /></svg>
            <svg width="16" height="16" viewBox="0 0 16 16"><circle cx="8" cy="8" r="6.500" fill="#fff" stroke="#808080" /><path d="M8 4v4l3 2" stroke="#555" fill="none" /></svg>
            <svg width="16" height="16" viewBox="0 0 20 20"><path d={handPath} fill="#fff" stroke="#808080" /></svg>
            <svg width="16" height="16" viewBox="0 0 16 16"><path d="M6 1.500h4v4h4.500v4H10v5H6v-5H1.500v-4H6z" fill="none" stroke="#808080" /><path d="M8 4v8M4 8h8" stroke="#A0A0A0" /></svg>
          </StatusIcons>
          <Cell $w={149}>Blöcke: 5 (5) S / 2 T</Cell>
          <Cell $w={127} $ml={2}>0 selektiert  0 passiv</Cell>
          <Cell $w={138} $ml={2}>T = 10  (0.01)  RK</Cell>
          <Cell $ml={2}>WinFACT 7 (Vollversion 7.1.1.301)  (C) Ingenieurbüro Dr. Kahlert 1990, 2005</Cell>
          <GripBox><CornerGrip /></GripBox>
        </Status>
      </Frame>
    </>
  );
}
